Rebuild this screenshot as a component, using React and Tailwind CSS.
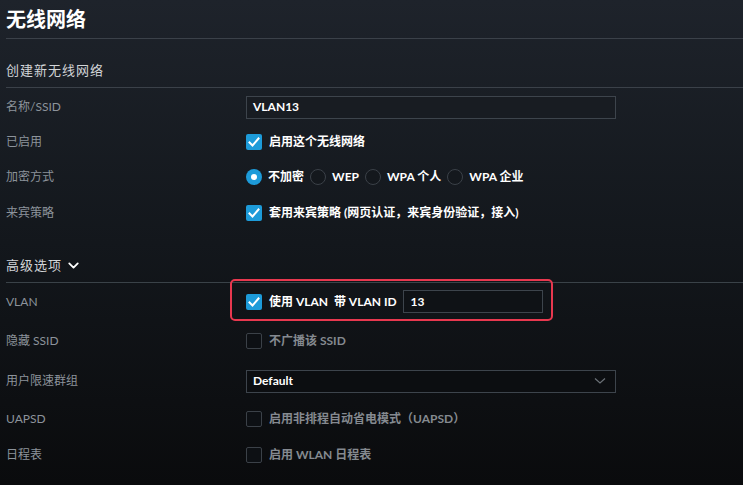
import { ChevronDown } from "lucide-react";

function Check({ checked }) {
  if (!checked) {
    return (
      <span className="w-[16px] h-[16px] shrink-0 rounded-[2px] border border-[#3b4148] bg-[#0d1014]" />
    );
  }
  return (
    <span className="w-[16px] h-[16px] shrink-0 rounded-[2px] bg-[#1d9bd9] flex items-center justify-center">
      <svg width="12" height="12" viewBox="0 0 12 12">
        <polyline
          points="1.5,6.5 4.5,9.5 10.5,2.5"
          fill="none"
          stroke="#fff"
          strokeWidth="2"
          strokeLinecap="square"
        />
      </svg>
    </span>
  );
}

function Radio({ checked }) {
  if (checked) {
    return (
      <span className="w-[16px] h-[16px] shrink-0 rounded-full bg-[#1d9bd9] flex items-center justify-center">
        <span className="w-[6px] h-[6px] rounded-full bg-white" />
      </span>
    );
  }
  return (
    <span className="w-[16px] h-[16px] shrink-0 rounded-full border border-[#3b4148] bg-[#14181d]" />
  );
}

function Row({ label, h, children }) {
  return (
    <div className={`flex items-center ${h}`}>
      <div className="w-[240px] shrink-0 text-[12px] text-[#8c939b]">{label}</div>
      <div className="flex-1 flex items-center relative">{children}</div>
    </div>
  );
}

export default function App() {
  const radios = [
    { label: "不加密", checked: true },
    { label: "WEP" },
    { label: "WPA 个人" },
    { label: "WPA 企业" },
  ];

  return (
    <div className="h-screen w-full overflow-hidden bg-linear-to-b from-[#1e232b] via-[#13171c] to-[#0a0b0d] pl-[6px] font-['Lato','Noto_Sans_CJK_SC',sans-serif]">
      <div className="h-[39px] flex items-center border-b border-[#3b4149] text-[20px] font-bold text-white">
        无线网络
      </div>
      <div className="h-[49px] flex items-end pb-[7px] border-b border-[#3b4149] text-[13px] tracking-[1px] text-[#d2d5d8]">
        创建新无线网络
      </div>

      <Row label="名称/SSID" h="h-[38px]">
        <div className="w-[370px] h-[23px] border border-[#3d444c] bg-[#181c22] flex items-center px-[6px] text-[12px] font-bold text-white">
          VLAN13
        </div>
      </Row>
      <Row label="已启用" h="h-[32px]">
        <Check checked />
        <span className="ml-[7px] text-[12px] font-bold text-white">启用这个无线网络</span>
      </Row>
      <Row label="加密方式" h="h-[38px]">
        <div className="flex items-center gap-[6px]">
          {radios.map((r) => (
            <div key={r.label} className="flex items-center gap-[6px]">
              <Radio checked={r.checked} />
              <span className="text-[12px] font-bold text-white">{r.label}</span>
            </div>
          ))}
        </div>
      </Row>
      <Row label="来宾策略" h="h-[34px]">
        <Check checked />
        <span className="ml-[7px] text-[12px] font-bold text-white">
          套用来宾策略 (网页认证，来宾身份验证，接入)
        </span>
      </Row>

      <div className="h-[53px] flex items-end pb-[7px] border-b border-[#3a4248] text-[13px] tracking-[1px] text-[#d2d5d8]">
        高级选项
        <ChevronDown size={17} strokeWidth={2.5} className="ml-[3px] mb-[1px] text-white" />
      </div>

      <Row label="VLAN" h="h-[37px]">
        <div className="absolute left-[-16px] top-[-11px] w-[323px] h-[42px] rounded-[5px] border-2 border-[#e8384f]" />
        <Check checked />
        <span className="ml-[7px] text-[12px] font-bold text-white whitespace-pre">使用 VLAN  带 VLAN ID</span>
        <div className="ml-[6px] w-[140px] h-[23px] border border-[#3d444c] bg-[#0f1216] flex items-center px-[7px] text-[12px] font-bold text-white">
          13
        </div>
      </Row>
      <Row label="隐藏 SSID" h="h-[42px]">
        <Check />
        <span className="ml-[7px] text-[12px] font-bold text-[#858a90]">不广播该 SSID</span>
      </Row>
      <Row label="用户限速群组" h="h-[38px]">
        <div className="w-[370px] h-[23px] border border-[#3d444c] bg-[#0c0e11] flex items-center justify-between px-[6px] text-[12px] font-bold text-white">
          Default
          <svg width="12" height="8" viewBox="0 0 12 8" className="mr-[3px]">
            <polyline points="1,1.5 6,6 11,1.5" fill="none" stroke="#6b7177" strokeWidth="1.2" />
          </svg>
        </div>
      </Row>
      <Row label="UAPSD" h="h-[38px]">
        <Check />
        <span className="ml-[7px] text-[12px] font-bold text-[#858a90]">
          启用非排程自动省电模式（UAPSD）
        </span>
      </Row>
      <Row label="日程表" h="h-[34px]">
        <Check />
        <span className="ml-[7px] text-[12px] font-bold text-[#858a90]">启用 WLAN 日程表</span>
      </Row>
    </div>
  );
}
